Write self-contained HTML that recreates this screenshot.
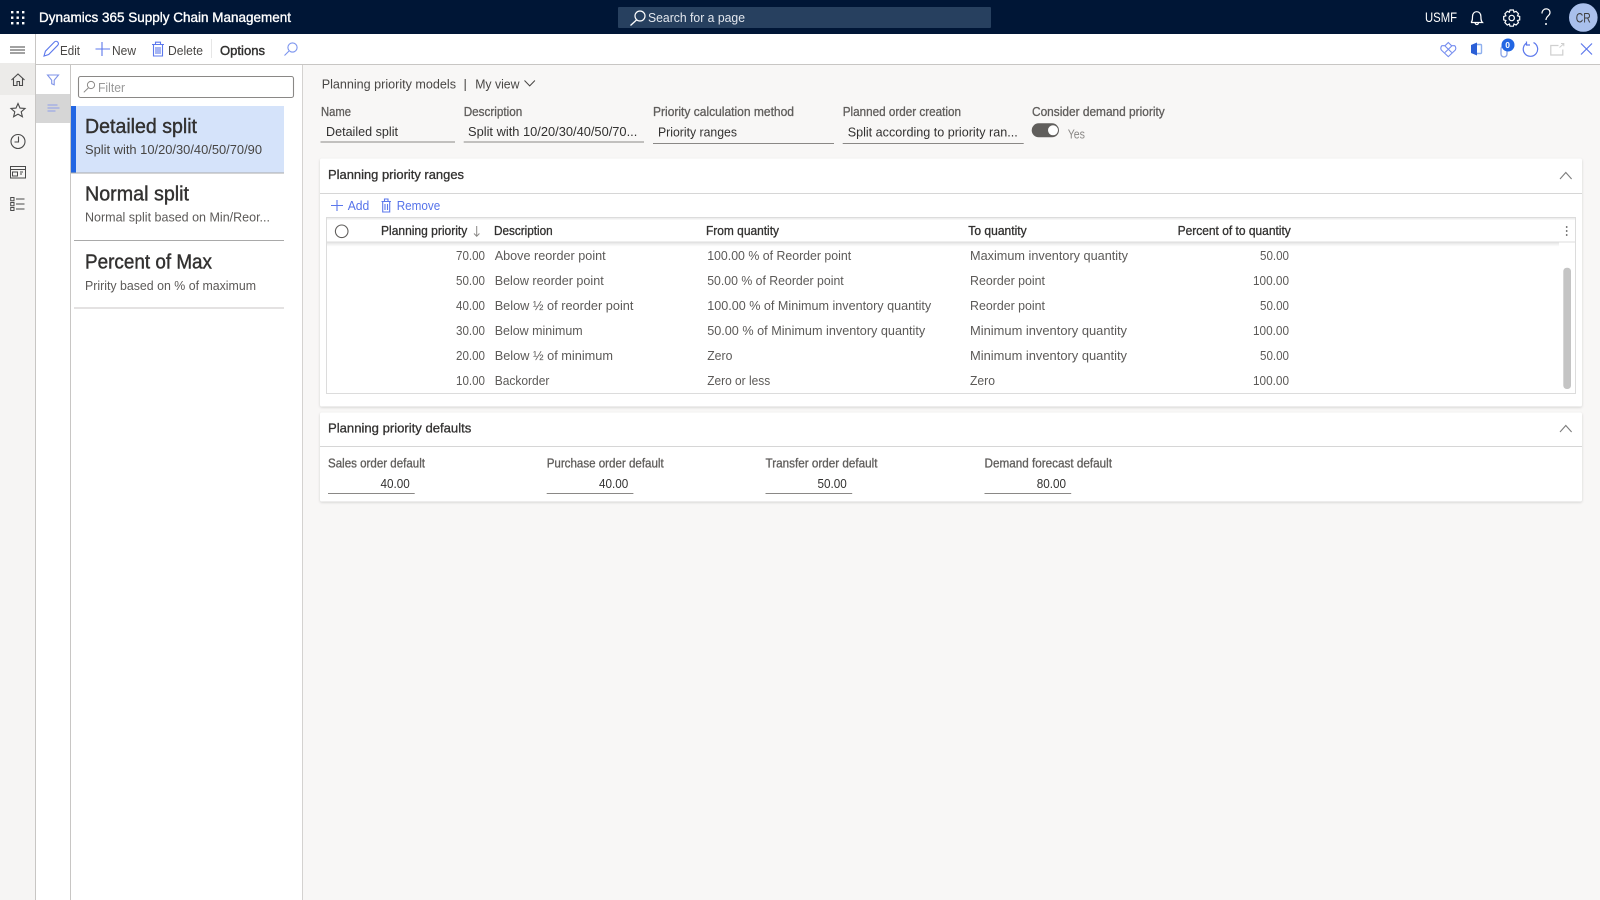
<!DOCTYPE html>
<html lang="en"><head><meta charset="utf-8"><title>Planning priority models</title>
<style>
html,body{margin:0;padding:0;width:1600px;height:900px;overflow:hidden;background:#f8f7f6}
svg{display:block;position:absolute;left:0;top:0;filter:blur(.25px)}
text{font-family:"Liberation Sans",sans-serif;font-size:13px;fill:#323130}
.w{fill:#fff}
.sb{stroke:#323130;stroke-width:.3}
.lb{fill:#605e5c;stroke:#605e5c;stroke-width:.3;font-size:12.5px}
.g{fill:#5c5a58}
.b{fill:#5673ea}
.h{font-size:20px;stroke:#323130;stroke-width:.4}
.ic{fill:none;stroke:#5c78ec;stroke-width:1.1}
.nv{fill:none;stroke:#4a4a4a;stroke-width:1.1}
.wi{fill:none;stroke:#fff;stroke-width:1.2}
</style></head><body>
<svg width="1600" height="900" viewBox="0 0 1600 900" xmlns="http://www.w3.org/2000/svg">
<defs>
<filter id="s" x="-2%" y="-5%" width="104%" height="110%"><feDropShadow dx="0" dy="1" stdDeviation="1.2" flood-color="#000" flood-opacity=".16"/></filter>
<linearGradient id="hs" x1="0" y1="0" x2="0" y2="1"><stop offset="0" stop-color="#e4e4e4"/><stop offset="1" stop-color="#fff"/></linearGradient>
</defs>
<rect width="1600" height="900" fill="#f8f7f6"/>

<!-- top bar -->
<rect width="1600" height="34" fill="#001636"/>
<g fill="#fff">
<rect x="11" y="11" width="2.4" height="2.4"/><rect x="16.5" y="11" width="2.4" height="2.4"/><rect x="22" y="11" width="2.4" height="2.4"/>
<rect x="11" y="16.5" width="2.4" height="2.4"/><rect x="16.5" y="16.5" width="2.4" height="2.4"/><rect x="22" y="16.5" width="2.4" height="2.4"/>
<rect x="11" y="22" width="2.4" height="2.4"/><rect x="16.5" y="22" width="2.4" height="2.4"/><rect x="22" y="22" width="2.4" height="2.4"/>
</g>
<text class="w" x="39" y="22" style="font-size:14px;stroke:#fff;stroke-width:.35" textLength="252" lengthAdjust="spacingAndGlyphs">Dynamics 365 Supply Chain Management</text>
<rect x="618" y="7" width="373" height="21" rx="1" fill="#27405f"/>
<circle cx="640" cy="16" r="5" fill="none" stroke="#fff" stroke-width="1.2"/><path d="M636.500 20 L630.500 25.500" stroke="#fff" stroke-width="1.300"/>
<text x="648" y="22" style="fill:#e3e7ee" textLength="97" lengthAdjust="spacingAndGlyphs">Search for a page</text>
<text class="w" x="1425" y="22" style="font-size:13.500px" textLength="32" lengthAdjust="spacingAndGlyphs">USMF</text>
<path class="wi" d="M1471 22.500h11.500c-1.500-1.500-1.600-3-1.600-6 0-3-1.800-4.800-4.200-4.800s-4.200 1.800-4.200 4.800c0 3-.1 4.500-1.500 6zM1475 22.500c.2 1.400 1 2 1.800 2s1.600-.6 1.800-2"/>
<circle class="wi" cx="1511.700" cy="18" r="2.700"/>
<path class="wi" d="M1510 10.500h3.400l.6 2.200 2.100-.9 2.400 2.400-1 2.100 2.200.7v3.400l-2.200.6 1 2.100-2.400 2.400-2.100-1-.6 2.200h-3.400l-.6-2.200-2.100 1-2.400-2.400 1-2.100-2.200-.6v-3.400l2.200-.7-1-2.100 2.400-2.400 2.100.9z" transform="translate(0,-.5)"/>
<path class="wi" d="M1542 13.500c0-6 8-6 8-1 0 3.500-4 3.500-4 7.500"/><circle cx="1546" cy="24" r="1" fill="#fff"/>
<circle cx="1583.300" cy="17.500" r="14.300" fill="#a9c0ec"/>
<text x="1575.800" y="22.500" style="fill:#3c3c3c;font-size:14px" textLength="15" lengthAdjust="spacingAndGlyphs">CR</text>

<!-- command bar -->
<rect y="34" width="1600" height="31" fill="#fff"/>
<rect y="64" width="1600" height="1" fill="#c8c6c4"/>
<path class="ic" d="M44 56l1.400-4.800 9-9.200c1-1 2.400-1 3.300 0s1 2.300 0 3.300l-9 9.200z"/>
<text x="60" y="55" style="fill:#484644" textLength="20" lengthAdjust="spacingAndGlyphs">Edit</text>
<path class="ic" d="M102 42v14M95.500 49h14.500"/>
<text x="112" y="55" style="fill:#484644" textLength="24" lengthAdjust="spacingAndGlyphs">New</text>
<path class="ic" d="M153.500 44.500v11.500h9v-11.500M152 44.500h12M155.500 44v-1.800h5V44M156 47v7M158 47v7M160 47v7"/>
<text x="168" y="55" style="fill:#484644" textLength="35" lengthAdjust="spacingAndGlyphs">Delete</text>
<rect x="211" y="39" width="1" height="19" fill="#e6e6e6"/>
<text x="220" y="55" style="stroke:#323130;stroke-width:.4" textLength="45" lengthAdjust="spacingAndGlyphs">Options</text>
<circle cx="292.500" cy="47.500" r="4.600" fill="none" stroke="#7a93ee" stroke-width="1.100"/><path d="M289 51l-4.500 4.500" fill="none" stroke="#7a93ee" stroke-width="1.100"/>

<path fill="none" stroke="#5c78ec" stroke-width="1.100" d="M1448.300 42.500l3.200 3.200h3.200c1.500 1.500 1.500 3.500 0 4.900l-6.400 6-6.400-6c-1.500-1.400-1.500-3.400 0-4.900h3.200z M1445 46l6.700 6.500M1451.700 46l-6.700 6.500" opacity=".85"/>
<path d="M1471 45l6-2.500v13l-6-2.500z" fill="#2b5fd6"/><path d="M1477 44.500h3.500a1 1 0 0 1 1 1v7a1 1 0 0 1-1 1h-3.500" fill="none" stroke="#8fb0ee" stroke-width="1.400"/>
<rect x="1501" y="46" width="6" height="11" rx="3" fill="none" stroke="#8aa3e6" stroke-width="1.300"/>
<circle cx="1508" cy="45" r="6.500" fill="#2266e3"/>
<text x="1505.300" y="48" style="font-size:8.500px;fill:#fff;font-weight:bold">0</text>
<path class="ic" d="M1527 42.800a7.200 7.200 0 1 0 6.500-.2M1526.500 41.500v3.500h3.500" style="stroke-width:1.200"/>
<path d="M1552 45.500h-1.200v9.500h12v-5.500M1551.500 45.500h7" fill="none" stroke="#cfcfcf" stroke-width="1.200"/><path d="M1559.500 47.500l4-3.500M1561 43.500h2.800v2.800" fill="none" stroke="#cfcfcf" stroke-width="1"/>
<path class="ic" d="M1581 43.500l11 11M1592 43.500l-11 11" style="stroke-width:1.200"/>

<!-- left rail -->
<rect y="65" width="35" height="835" fill="#f6f5f4"/>
<rect x="0" y="34" width="35" height="31" fill="#fff"/>
<rect x="0" y="63" width="35" height="32" fill="#ecebe9"/>
<rect x="35" y="34" width="1" height="866" fill="#c8c6c4"/>
<path d="M10 47h15M10 50h15M10 53h15" stroke="#444" stroke-width="1"/>
<path class="nv" d="M11.500 80l6.500-6 6.500 6M13.500 78.500v7h3.500v-4h2.500v4h3v-7"/>
<path class="nv" d="M18 103.500l2 4.600 5 .4-3.800 3.300 1.200 4.900-4.400-2.600-4.400 2.600 1.200-4.900-3.800-3.300 5-.4z"/>
<circle class="nv" cx="18" cy="141.500" r="7"/><path class="nv" d="M18.500 136.500v5.500h-4"/>
<path class="nv" d="M10.500 166.500h15v11.500h-15zM10.500 169.500h15M12.500 172h5v4h-5zM20 172h3M20 174h2" style="stroke-width:1"/>
<path class="nv" d="M10.700 197.500h3.300v3.300h-3.300zM10.700 202.500h3.300v3.300h-3.300zM10.700 207.500h3.300v3h-3.300zM16 199h8.500M16 204h8.500M16 209h8.500" style="stroke-width:1"/>

<!-- filter tabs -->
<rect x="36" y="65" width="34" height="835" fill="#fff"/>
<rect x="36" y="94" width="34" height="29" fill="#d6d6d6"/>
<rect x="70" y="65" width="1" height="835" fill="#c8c6c4"/>
<path class="ic" d="M47.500 75h11l-4.300 5.200v4.600l-2.500-1v-3.600z" style="stroke:#7f93e8"/>
<path d="M47.500 105h10M47.500 108h12M47.500 111h8" stroke="#8d9fe9" stroke-width="1.100"/>

<!-- list pane -->
<rect x="71" y="65" width="231" height="835" fill="#fff"/>
<rect x="302" y="65" width="1" height="835" fill="#d4d2d0"/>
<rect x="78.500" y="76.500" width="215" height="21" rx="2" fill="#fff" stroke="#8a8886" stroke-width="1.100"/>
<circle cx="91" cy="85" r="3.600" fill="none" stroke="#8a8886"/><path d="M88.300 88l-4.500 4.300" stroke="#8a8886"/>
<text x="98" y="92" style="fill:#999" textLength="27" lengthAdjust="spacingAndGlyphs">Filter</text>

<rect x="71" y="106" width="213" height="67" fill="#d5e3fa"/>
<rect x="71" y="106" width="5" height="67" fill="#2266e3"/>
<rect x="71" y="172.500" width="213" height="1" fill="#a9a9a9"/>
<text class="h" x="85" y="133" textLength="112" lengthAdjust="spacingAndGlyphs">Detailed split</text>
<text x="85" y="154" style="fill:#484644;font-size:12.500px" textLength="177" lengthAdjust="spacingAndGlyphs">Split with 10/20/30/40/50/70/90</text>
<text class="h" x="85" y="200.500" textLength="104" lengthAdjust="spacingAndGlyphs">Normal split</text>
<text class="g" x="85" y="221.500" style="font-size:12.500px" textLength="185" lengthAdjust="spacingAndGlyphs">Normal split based on Min/Reor...</text>
<rect x="74" y="240" width="210" height="1" fill="#a9a9a9"/>
<text class="h" x="85" y="268.500" textLength="127" lengthAdjust="spacingAndGlyphs">Percent of Max</text>
<text class="g" x="85" y="290" style="font-size:12.500px" textLength="171" lengthAdjust="spacingAndGlyphs">Pririty based on % of maximum</text>
<rect x="74" y="307.500" width="210" height="1" fill="#c8c6c4"/>

<!-- page header -->
<text x="321.700" y="88.500" style="fill:#484644" textLength="134.300" lengthAdjust="spacingAndGlyphs">Planning priority models</text>
<text x="463.500" y="88.500" style="fill:#484644">|</text>
<text x="475.200" y="88.500" style="fill:#484644" textLength="44.300" lengthAdjust="spacingAndGlyphs">My view</text>
<path d="M524.500 80.500l5.200 5.400 5.200-5.400" fill="none" stroke="#484644" stroke-width="1"/>

<text class="lb" x="321" y="116" textLength="30" lengthAdjust="spacingAndGlyphs">Name</text>
<text x="326" y="136" textLength="72" lengthAdjust="spacingAndGlyphs">Detailed split</text>
<rect x="320.500" y="141.500" width="134.500" height="1" fill="#8a8886"/>
<text class="lb" x="463.700" y="116" textLength="58.600" lengthAdjust="spacingAndGlyphs">Description</text>
<text x="468" y="136" textLength="169.300" lengthAdjust="spacingAndGlyphs">Split with 10/20/30/40/50/70...</text>
<rect x="463.700" y="141.500" width="180.300" height="1" fill="#8a8886"/>
<text class="lb" x="653" y="116" textLength="141" lengthAdjust="spacingAndGlyphs">Priority calculation method</text>
<text x="658" y="136.700" textLength="79" lengthAdjust="spacingAndGlyphs">Priority ranges</text>
<rect x="653" y="143" width="181" height="1" fill="#8a8886"/>
<text class="lb" x="842.700" y="116" textLength="118.300" lengthAdjust="spacingAndGlyphs">Planned order creation</text>
<text x="847.700" y="136.700" textLength="170" lengthAdjust="spacingAndGlyphs">Split according to priority ran...</text>
<rect x="842.700" y="143" width="181" height="1" fill="#8a8886"/>
<text class="lb" x="1032" y="116" textLength="132.700" lengthAdjust="spacingAndGlyphs">Consider demand priority</text>
<rect x="1031.700" y="123.300" width="27.300" height="14" rx="7" fill="#605e5c"/>
<circle cx="1053" cy="130.300" r="5" fill="#fff"/>
<text x="1067.700" y="138.300" style="fill:#8a8886" textLength="17.300" lengthAdjust="spacingAndGlyphs">Yes</text>

<!-- card 1 -->
<rect x="320" y="158.500" width="1262" height="248" rx="2" fill="#fff" filter="url(#s)"/>
<rect x="320" y="193" width="1262" height="1" fill="#d6d6d6"/>
<text x="328" y="179" style="stroke:#323130;stroke-width:.3" textLength="136" lengthAdjust="spacingAndGlyphs">Planning priority ranges</text>
<path d="M1560 179l5.800-6.500 5.800 6.500" fill="none" stroke="#7d7d7d" stroke-width="1.100"/>
<path class="ic" d="M337 200v11M331 205.500h12"/>
<text class="b" x="347.700" y="210" textLength="21.600" lengthAdjust="spacingAndGlyphs">Add</text>
<path class="ic" d="M382.700 201.500v10.500h7v-10.500M381.500 201.500h9.500M384.500 201v-2h3.500v2M385 204v6M387.500 204v6"/>
<text class="b" x="396.700" y="210" textLength="43.600" lengthAdjust="spacingAndGlyphs">Remove</text>

<rect x="326.500" y="217.500" width="1249" height="176" fill="#fff" stroke="#dcdcdc"/>
<rect x="327" y="218" width="1248" height="1.500" fill="#eeeeee"/>
<rect x="327" y="241.500" width="1248" height="1" fill="#dedede"/>
<rect x="327" y="242.500" width="1232" height="4" fill="url(#hs)"/>
<circle cx="341.700" cy="231.300" r="6.300" fill="#fff" stroke="#605e5c" stroke-width="1.100"/>
<g>
<text class="sb" x="381" y="235" textLength="86.300" lengthAdjust="spacingAndGlyphs" style="font-size:12.500px">Planning priority</text>
<path d="M476.700 226v10M474 233.500l2.700 2.800 2.700-2.800" fill="none" stroke="#8a8886"/>
<text class="sb" x="494" y="235" textLength="58.700" lengthAdjust="spacingAndGlyphs" style="font-size:12.500px">Description</text>
<text class="sb" x="706" y="235" textLength="73" lengthAdjust="spacingAndGlyphs" style="font-size:12.500px">From quantity</text>
<text class="sb" x="968.300" y="235" textLength="58.400" lengthAdjust="spacingAndGlyphs" style="font-size:12.500px">To quantity</text>
<text class="sb" x="1177.600" y="235" textLength="113.200" lengthAdjust="spacingAndGlyphs" style="font-size:12.500px">Percent of to quantity</text>
</g>
<g fill="#555"><circle cx="1566.700" cy="227" r=".9"/><circle cx="1566.700" cy="231" r=".9"/><circle cx="1566.700" cy="235" r=".9"/></g>
<rect x="1563.300" y="267.700" width="7.700" height="121.300" rx="3.500" fill="#c4c4c4"/>

<g>
<text class="g" x="456" y="260" textLength="29" lengthAdjust="spacingAndGlyphs">70.00</text>
<text class="g" x="494.700" y="260" textLength="111" lengthAdjust="spacingAndGlyphs">Above reorder point</text>
<text class="g" x="707.200" y="260" textLength="144" lengthAdjust="spacingAndGlyphs">100.00 % of Reorder point</text>
<text class="g" x="970" y="260" textLength="158" lengthAdjust="spacingAndGlyphs">Maximum inventory quantity</text>
<text class="g" x="1260" y="260" textLength="29" lengthAdjust="spacingAndGlyphs">50.00</text>

<text class="g" x="456" y="285" textLength="29" lengthAdjust="spacingAndGlyphs">50.00</text>
<text class="g" x="494.700" y="285" textLength="109" lengthAdjust="spacingAndGlyphs">Below reorder point</text>
<text class="g" x="707.200" y="285" textLength="136.500" lengthAdjust="spacingAndGlyphs">50.00 % of Reorder point</text>
<text class="g" x="970" y="285" textLength="75" lengthAdjust="spacingAndGlyphs">Reorder point</text>
<text class="g" x="1253" y="285" textLength="36" lengthAdjust="spacingAndGlyphs">100.00</text>

<text class="g" x="456" y="310" textLength="29" lengthAdjust="spacingAndGlyphs">40.00</text>
<text class="g" x="494.700" y="310" textLength="138.700" lengthAdjust="spacingAndGlyphs">Below ½ of reorder point</text>
<text class="g" x="707.200" y="310" textLength="224" lengthAdjust="spacingAndGlyphs">100.00 % of Minimum inventory quantity</text>
<text class="g" x="970" y="310" textLength="75" lengthAdjust="spacingAndGlyphs">Reorder point</text>
<text class="g" x="1260" y="310" textLength="29" lengthAdjust="spacingAndGlyphs">50.00</text>

<text class="g" x="456" y="335" textLength="29" lengthAdjust="spacingAndGlyphs">30.00</text>
<text class="g" x="494.700" y="335" textLength="88" lengthAdjust="spacingAndGlyphs">Below minimum</text>
<text class="g" x="707.200" y="335" textLength="218" lengthAdjust="spacingAndGlyphs">50.00 % of Minimum inventory quantity</text>
<text class="g" x="970" y="335" textLength="157" lengthAdjust="spacingAndGlyphs">Minimum inventory quantity</text>
<text class="g" x="1253" y="335" textLength="36" lengthAdjust="spacingAndGlyphs">100.00</text>

<text class="g" x="456" y="360" textLength="29" lengthAdjust="spacingAndGlyphs">20.00</text>
<text class="g" x="494.700" y="360" textLength="118.300" lengthAdjust="spacingAndGlyphs">Below ½ of minimum</text>
<text class="g" x="707.200" y="360" textLength="25.200" lengthAdjust="spacingAndGlyphs">Zero</text>
<text class="g" x="970" y="360" textLength="157" lengthAdjust="spacingAndGlyphs">Minimum inventory quantity</text>
<text class="g" x="1260" y="360" textLength="29" lengthAdjust="spacingAndGlyphs">50.00</text>

<text class="g" x="456" y="385" textLength="29" lengthAdjust="spacingAndGlyphs">10.00</text>
<text class="g" x="494.700" y="385" textLength="54.700" lengthAdjust="spacingAndGlyphs">Backorder</text>
<text class="g" x="707.200" y="385" textLength="63" lengthAdjust="spacingAndGlyphs">Zero or less</text>
<text class="g" x="970" y="385" textLength="25" lengthAdjust="spacingAndGlyphs">Zero</text>
<text class="g" x="1253" y="385" textLength="36" lengthAdjust="spacingAndGlyphs">100.00</text>
</g>

<!-- card 2 -->
<rect x="320" y="412.500" width="1262" height="89" rx="2" fill="#fff" filter="url(#s)"/>
<rect x="320" y="446" width="1262" height="1" fill="#d6d6d6"/>
<text x="328" y="432.300" style="stroke:#323130;stroke-width:.3" textLength="143.300" lengthAdjust="spacingAndGlyphs">Planning priority defaults</text>
<path d="M1560 432l5.800-6.500 5.800 6.500" fill="none" stroke="#7d7d7d" stroke-width="1.100"/>
<text class="lb" x="328" y="467.300" textLength="97" lengthAdjust="spacingAndGlyphs">Sales order default</text>
<text class="lb" x="546.700" y="467.300" textLength="117" lengthAdjust="spacingAndGlyphs">Purchase order default</text>
<text class="lb" x="765.500" y="467.300" textLength="112" lengthAdjust="spacingAndGlyphs">Transfer order default</text>
<text class="lb" x="984.500" y="467.300" textLength="127.500" lengthAdjust="spacingAndGlyphs">Demand forecast default</text>
<text x="380.500" y="488" textLength="29.300" lengthAdjust="spacingAndGlyphs">40.00</text>
<text x="599" y="488" textLength="29.300" lengthAdjust="spacingAndGlyphs">40.00</text>
<text x="817.500" y="488" textLength="29.300" lengthAdjust="spacingAndGlyphs">50.00</text>
<text x="1036.700" y="488" textLength="29.300" lengthAdjust="spacingAndGlyphs">80.00</text>
<g fill="#8a8886">
<rect x="328" y="493" width="86.700" height="1"/><rect x="546.700" y="493" width="86.700" height="1"/><rect x="765.500" y="493" width="86.700" height="1"/><rect x="984.500" y="493" width="86.700" height="1"/>
</g>
</svg>
</body></html>
